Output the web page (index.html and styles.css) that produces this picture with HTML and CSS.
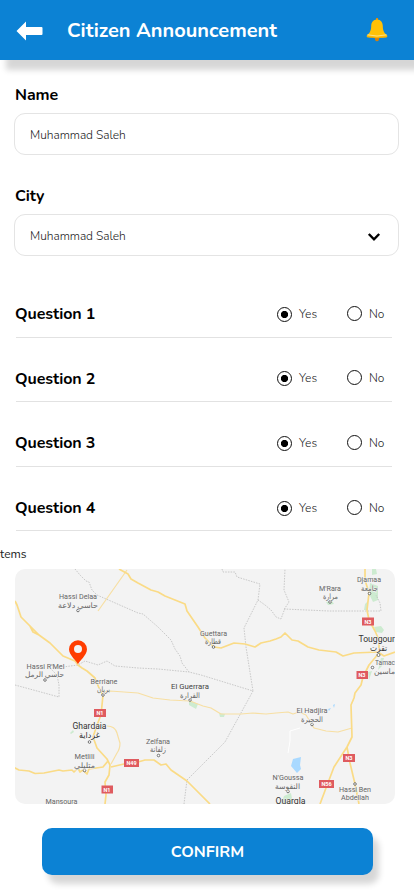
FILE: index.html
```html
<!DOCTYPE html>
<html lang="en">
<head>
<meta charset="utf-8">
<title>Citizen Announcement</title>
<link rel="stylesheet" href="styles.css">
</head>
<body>
<header class="topbar">
  <svg class="back" width="28" height="20" viewBox="0 0 28 20"><path d="M.5 10 10 .5V6H25.500q1 0 1 1v6q0 1-1 1H10v5.500Z" fill="#fff"/></svg>
  <h1 class="title">Citizen Announcement</h1>
  <svg class="bell" width="22" height="24" viewBox="0 0 22 24"><rect x="10" y="0" width="2" height="4" fill="#e08a0b"/><path d="M8.500 19h5l-.7 3q-.2 1.200-1.800 1.200T9.200 22Z" fill="#d87f08"/><path d="M11 1.500C7 1.500 5.300 4.500 5.200 8c-.1 4-.8 6.500-4.200 9.300Q0 18.200 1.200 19C3.500 20.200 18.500 20.200 20.800 19q1.200-.8.200-1.700C17.600 14.500 16.900 12 16.800 8 16.700 4.500 15 1.500 11 1.500Z" fill="#ffc107"/><path d="M1.500 16.800Q11 19.300 20.500 16.800" fill="none" stroke="#ffe184" stroke-width="1"/><path d="M1 18.800Q11 20.800 21 18.800" fill="none" stroke="#eda60a" stroke-width=".8"/></svg>
</header>
<main>
  <section class="field">
    <label class="label">Name</label>
    <div class="control"><span class="value">Muhammad Saleh</span></div>
  </section>
  <section class="field">
    <label class="label">City</label>
    <div class="control"><span class="value">Muhammad Saleh</span>
      <svg class="chevron" width="14" height="10" viewBox="0 0 14 10"><path d="M1.800 2 7 7.300 12.200 2" fill="none" stroke="#000" stroke-width="2.400"/></svg>
    </div>
  </section>
  <section class="questions">
    <div class="question"><span class="label">Question 1</span><span class="radio on"></span><span class="option yes">Yes</span><span class="radio off"></span><span class="option">No</span></div>
    <div class="question"><span class="label">Question 2</span><span class="radio on"></span><span class="option yes">Yes</span><span class="radio off"></span><span class="option">No</span></div>
    <div class="question"><span class="label">Question 3</span><span class="radio on"></span><span class="option yes">Yes</span><span class="radio off"></span><span class="option">No</span></div>
    <div class="question"><span class="label">Question 4</span><span class="radio on"></span><span class="option yes">Yes</span><span class="radio off"></span><span class="option">No</span></div>
  </section>
  <p class="items">tems</p>
  <svg class="map" width="380" height="235" viewBox="15 569 380 235">
    <rect x="15" y="569" width="380" height="235" fill="#f3f3f3"/>
    <g fill="#cdebd0">
      <path d="M372 569h4l1 5-5 1ZM370 583l8 3 0 14-5 2-4-8ZM365 604l3-3 0 9-4 0ZM374 627l7-1 3 4-2 3-6-1ZM381 658l3 0-2 8-4 4ZM368 672l4-1-3 9ZM189 700l9 4-2 5-7-4ZM219 713l6 1-1 3-4 0ZM70 733l3-3 1 2-3 2ZM326 602l6-1 2 3-6 1ZM284 796l7-3 2 11h-12Z"/>
    </g>
    <path d="m293 759 8-2-1 8 1 4-4 4-6-7ZM333 705l2-1-1 4ZM328 709l3-1-2 3Z" fill="#a9d9ff"/>
    <path d="M290 741v-10l10-3M290 741l-2 12" fill="none" stroke="#fff" stroke-width="1"/>
    <g class="border">
      <path d="m75 569 5 6 6 6 3 1 3 8 5 5 41 18 5 1 15 13 13 13 4 9 5 7 2 7 7 9 12 3 52 16-28 51-38 38-3 24"/>
      <path d="m63 667 15-2 7-4 13 4 9-4 8 5 23 2 20 1 31 3M222 569l1 3 12 0 2 5 23 7-2 16-14 28 2 19 7 44M258 600l7 5 6 5 5 7 5 2 4-11 4-6-5-12 1-21M284 609l45 2h52l-1-8-4-8M15 685l44 12V685l-2-10-6-6"/>
    </g>
    <g class="road thin">
      <path d="M127 570 98 611M107 726q8 0 10 7t3 10q0 6-3 10l-6 11"/>
      <path d="m103 692 7-1 28 2 15 5 17 2 20 1 13 5 8 2 10 6h20l12-1 13 1 10-1 12-1 5 2 6-2 7 3 8 13 12 3 12 1 14-4"/>
    </g>
    <g class="road">
      <path d="m15 601 2 4 4 12 11 11 7 7 11 8 13 13 12 5 3 4 4 3 5 3 8 7 4 10 4 7-2 20-4 10-4 12 4 11 10 11 3 6-1 10-4 7 1 13-1 9M30 626l3 6 6 3"/>
      <path d="m108 761-5 6-14 2-2 5-4-4-3 2-2-4-4 4-2-2-9 1-4-1-15 3-9 .5-6-2.500-10-1-8-4M111 767l13-3 14-2 7-2h9l7 5 5-1 5 6 16 11 23 23"/>
      <path d="m119 569 9 5 3 5 7 4 13 7 7 2 7 4 20 8 2 7 11 16 7 11 9 9 7 1 13-5 11 1 10 3 6-4 9-2 6-2 5-2 4-4 7 7 6 1 10 6 11 3 17 2 7 4 11-3 24-1 6 4 11-4"/>
      <path d="M365 569v11l4 13-2 17 2 10 6 11 4 9v13l-10 12-6 12-2 8-6 8-1 5-3 7 1 32-5 10-13 20-8 21-6 16M347 747l3 16 5 21 4 20"/>
    </g>
    <g class="place">
      <circle cx="78" cy="610.500" r="1.300"/><circle cx="45" cy="680" r="1.300"/><circle cx="103" cy="695" r="1.300"/><circle cx="89.500" cy="742" r="1.300"/><circle cx="84.500" cy="770.500" r="1.300"/><circle cx="158.500" cy="755.500" r="1.300"/><circle cx="213.500" cy="647" r="1.300"/><circle cx="190" cy="700" r="1.300"/><circle cx="330" cy="602" r="1.300"/><circle cx="369.500" cy="593.500" r="1.300"/><circle cx="378.500" cy="655" r="1.500"/><circle cx="372.500" cy="667.500" r="1.300"/><circle cx="312" cy="724.500" r="1.300"/><circle cx="288" cy="791.500" r="1.300"/><circle cx="355" cy="784" r="1.300"/>
    </g>
    <g class="name">
      <text x="59" y="599" textLength="38" lengthAdjust="spacingAndGlyphs">Hassi Delaa</text><text x="58" y="608" textLength="40" lengthAdjust="spacingAndGlyphs">حاسي دلاعة</text>
      <text x="26.500" y="668.500" textLength="38" lengthAdjust="spacingAndGlyphs">Hassi R'Mel</text><text x="25" y="677" textLength="39" lengthAdjust="spacingAndGlyphs">حاسي الرمل</text>
      <text x="90.500" y="683.500" textLength="27" lengthAdjust="spacingAndGlyphs">Berriane</text><text x="97" y="692" textLength="13" lengthAdjust="spacingAndGlyphs">بريان</text>
      <text x="74.500" y="759" textLength="20" lengthAdjust="spacingAndGlyphs">Metlili</text><text x="74" y="768" textLength="21" lengthAdjust="spacingAndGlyphs">متليلي</text>
      <text x="45.500" y="804" textLength="32" lengthAdjust="spacingAndGlyphs">Mansoura</text>
      <text x="146" y="744" textLength="24" lengthAdjust="spacingAndGlyphs">Zelfana</text><text x="150" y="752" textLength="16" lengthAdjust="spacingAndGlyphs">زلفانة</text>
      <text x="200" y="635.500" textLength="27" lengthAdjust="spacingAndGlyphs">Guettara</text><text x="205" y="644" textLength="16" lengthAdjust="spacingAndGlyphs">قطارة</text>
      <text x="171" y="688.500" textLength="38" lengthAdjust="spacingAndGlyphs" class="dark">El Guerrara</text><text x="180" y="697.500" textLength="20" lengthAdjust="spacingAndGlyphs">القرارة</text>
      <text x="319" y="590.500" textLength="22" lengthAdjust="spacingAndGlyphs">M'Rara</text><text x="323" y="599" textLength="15" lengthAdjust="spacingAndGlyphs">مرارة</text>
      <text x="357" y="582" textLength="24" lengthAdjust="spacingAndGlyphs">Djamaa</text><text x="361" y="590.500" textLength="17" lengthAdjust="spacingAndGlyphs">جامعة</text>
      <text x="375" y="665" textLength="20" lengthAdjust="spacingAndGlyphs">Tamac</text><text x="374" y="674" textLength="21" lengthAdjust="spacingAndGlyphs">ماسين</text>
      <text x="296.500" y="713" textLength="31" lengthAdjust="spacingAndGlyphs">El Hadjira</text><text x="301" y="722" textLength="22" lengthAdjust="spacingAndGlyphs">الحجيرة</text>
      <text x="272.500" y="780" textLength="31" lengthAdjust="spacingAndGlyphs">N'Goussa</text><text x="275" y="789" textLength="25" lengthAdjust="spacingAndGlyphs">النقوسة</text>
      <text x="339" y="791.500" textLength="32" lengthAdjust="spacingAndGlyphs">Hassi Ben</text><text x="341" y="800" textLength="28" lengthAdjust="spacingAndGlyphs">Abdellah</text>
    </g>
    <g class="name city-name">
      <text x="72.500" y="728.500" textLength="34" lengthAdjust="spacingAndGlyphs">Ghardaia</text><text x="79" y="738" textLength="21" lengthAdjust="spacingAndGlyphs">غرداية</text>
      <text x="358.500" y="641.500" textLength="36.500" lengthAdjust="spacingAndGlyphs">Touggour</text><text x="370" y="651" textLength="17" lengthAdjust="spacingAndGlyphs">تقرت</text>
      <text x="275.500" y="804" textLength="30" lengthAdjust="spacingAndGlyphs">Ouargla</text>
    </g>
    <g fill="#df5b5f"><path d="M94 709h12v8H94ZM101.500 785.500h11.500v8h-11.500ZM124 759h15v8h-15ZM362 617.500h12v8h-12ZM356.500 671h11.500v8h-11.500ZM343 754h12v8h-12ZM319 780h15v8h-15Z"/></g>
    <g class="shield"><text x="100" y="715.300">N1</text><text x="107" y="791.800">N1</text><text x="131.500" y="765.300">N49</text><text x="368" y="623.800">N3</text><text x="362" y="677.300">N3</text><text x="349" y="760.300">N3</text><text x="326.500" y="786.300">N56</text></g>
    <path d="M78 664.300c-1-3-9-9-9-15a9 9 0 0 1 18 0c0 6-8 12-9 15Z" fill="#ff3d00"/><circle cx="78" cy="649" r="4" fill="#f3f3f3"/>
  </svg>
  <button class="confirm">CONFIRM</button>
</main>
</body>
</html>
```

FILE: styles.css
```css
* { box-sizing: border-box; }
body { margin: 0; width: 414px; height: 896px; overflow: hidden; background: #fff; color: #000; font-family: Nunito, Lato, "Open Sans", sans-serif; }
.topbar { display: flex; align-items: center; height: 60px; padding-left: 16px; background: #0c82d4; box-shadow: 6px 10px 6px rgba(0, 0, 0, .16); }
.back { margin-top: 2px; }
.title { margin: 2px 0 0 23px; width: 211px; font-size: 20px; line-height: 28px; font-weight: 700; color: #fff; white-space: nowrap; }
.bell { margin-left: 88px; margin-top: -1px; }
main { display: flex; flex-direction: column; }
.field { display: flex; flex-direction: column; margin: 0 15px; height: 101px; }
.field:first-child { margin-top: 24px; }
.label { font-size: 16px; font-weight: 700; line-height: 23px; letter-spacing: -.08px; }
.control { display: flex; align-items: center; justify-content: space-between; height: 42px; margin: 6px 0 0 -1px; padding: 2px 17px 0 15px; border: 1px solid #e4e4e4; border-radius: 11px; }
.value { font-size: 12px; font-weight: 300; color: #222; letter-spacing: -.04px; }
.chevron { margin-top: 1px; }
.questions { margin: -13px 22px 0 16px; }
.question { display: flex; align-items: center; height: 64.600px; padding-top: 18px; border-bottom: 1px solid #e2e2e2; }
.question .label { flex: 1; padding-top: 2px; margin-left: -1px; }
.radio { width: 15px; height: 15px; border: 1.500px solid #111; border-radius: 50%; }
.radio.on { margin-top: 1px; background: radial-gradient(circle, #000 3.300px, transparent 3.900px); }
.radio.off { margin-top: -1px; }
.option { margin-left: 7px; width: 23px; font-size: 12px; font-weight: 300; color: #222; }
.option.yes { width: 48px; }
.items { margin: 12.600px 0 0; height: 25px; line-height: 20px; font-size: 12px; color: #222; }
.map { display: block; margin-left: 15px; border-radius: 10px; }
.border { fill: none; stroke: #bdbdbd; stroke-width: .8; stroke-dasharray: 1.500 1.200; }
.road { fill: none; stroke: #fadb86; stroke-width: 1.700; stroke-linejoin: round; }
.road.thin { stroke: #f7dfa3; stroke-width: 1.200; }
.place { fill: #fff; stroke: #555; stroke-width: .8; }
.name { font: 7.500px Roboto, "DejaVu Sans", sans-serif; fill: #666; stroke: #f3f3f3; stroke-width: 1px; paint-order: stroke; }
.dark { fill: #444; }
.city-name { font-size: 8.500px; fill: #333; }
.shield { font: 700 5.500px Roboto, sans-serif; fill: #fff; text-anchor: middle; }
.confirm { width: 331px; height: 47px; margin: 24px 0 0 42px; padding: 1px 0 0; border: 0; border-radius: 10px; background: #0c82d4; color: #fff; font: 700 16px/46px Nunito, Lato, sans-serif; box-shadow: 6px 9px 6px rgba(0, 0, 0, .16); }
```
